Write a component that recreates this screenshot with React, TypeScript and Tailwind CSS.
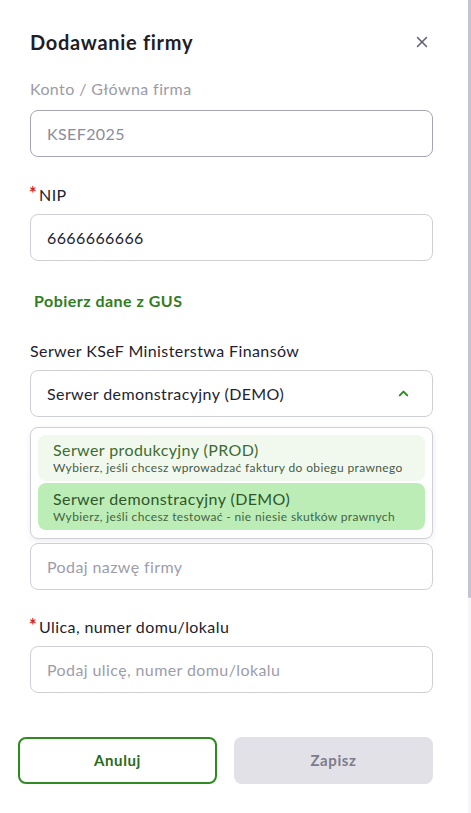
import { X, ChevronUp } from "lucide-react";

const font = { fontFamily: "Lato, 'Open Sans', sans-serif" };

const Label = ({ text, required, muted }: { text: string; required?: boolean; muted?: boolean }) => (
  <div className={`flex items-start text-[16px] leading-5 tracking-[0.025em] ${muted ? "text-[#9b9ba6]" : "text-[#22222e]"}`}>
    {required && <span className="text-[#d4202c] text-[18px] font-bold leading-4 mr-[2px] -ml-[1px]">*</span>}
    <span>{text}</span>
  </div>
);

const Input = ({ value, placeholder, dark, strong }: { value?: string; placeholder?: string; dark?: boolean; strong?: boolean }) => (
  <div
    className={`h-[47px] rounded-lg border bg-white flex items-center px-4 text-[16px] tracking-[0.025em] ${
      strong ? "border-[#a5a5b4]" : "border-[#cfcfd8]"
    } ${value ? (dark ? "text-[#23232f]" : "text-[#8c8c99]") : "text-[#9d9daa]"}`}
  >
    {value ?? placeholder}
  </div>
);

export default function App() {
  return (
    <div className="relative w-[471px] h-[813px] bg-white overflow-hidden" style={font}>
      <div className="pl-[30px] pr-[38px] pt-[30px]">
        {/* Header */}
        <div className="flex items-center justify-between h-[24px]">
          <h1 className="text-[20px] font-bold text-[#1e1e28] leading-6 tracking-[0.035em]">Dodawanie firmy</h1>
          <X className="w-[18px] h-[18px] text-[#5f5f72] mr-[2px]" strokeWidth={2} />
        </div>

        <div className="mt-[25px]">
          <Label text="Konto / Główna firma" muted />
        </div>
        <div className="mt-[11px]">
          <Input value="KSEF2025" strong />
        </div>

        <div className="mt-[28px]">
          <Label text="NIP" required />
        </div>
        <div className="mt-[9px]">
          <Input value="6666666666" dark />
        </div>

        <div className="mt-[30px] pl-[4px] text-[16px] font-bold text-[#2f7d1f] leading-5 tracking-[0.03em]">Pobierz dane z GUS</div>

        <div className="mt-[30px]">
          <Label text="Serwer KSeF Ministerstwa Finansów" />
        </div>
        <div className="mt-[9px] h-[47px] rounded-lg border border-[#cfcfd8] flex items-center justify-between px-4 text-[16px] tracking-[0.025em] text-[#23232f]">
          <span>Serwer demonstracyjny (DEMO)</span>
          <ChevronUp className="w-[15px] h-[15px] text-[#2f8a22] mr-[5px]" strokeWidth={3.2} />
        </div>

        {/* Dropdown */}
        <div className="mt-[10px] rounded-lg border border-[#cfcfd8] bg-white shadow-[0_2px_6px_rgba(0,0,0,0.08)] px-[7px] pt-[7px] pb-[8px] flex flex-col gap-[2px]">
          <div className="rounded-lg bg-[#f1f9ef] h-[46px] px-[15px] flex flex-col justify-center">
            <span className="text-[16px] leading-5 tracking-[0.025em] text-[#3d6b32]">Serwer produkcyjny (PROD)</span>
            <span className="text-[12px] leading-4 tracking-[0.03em] text-[#4a5a46]">Wybierz, jeśli chcesz wprowadzać faktury do obiegu prawnego</span>
          </div>
          <div className="rounded-lg bg-[#bcedb7] h-[47px] px-[15px] flex flex-col justify-center">
            <span className="text-[16px] leading-5 tracking-[0.025em] text-[#30562a]">Serwer demonstracyjny (DEMO)</span>
            <span className="text-[12px] leading-4 tracking-[0.03em] text-[#46643f]">Wybierz, jeśli chcesz testować - nie niesie skutków prawnych</span>
          </div>
        </div>

        <div className="mt-[4px]">
          <Input placeholder="Podaj nazwę firmy" />
        </div>

        <div className="mt-[27px]">
          <Label text="Ulica, numer domu/lokalu" required />
        </div>
        <div className="mt-[9px]">
          <Input placeholder="Podaj ulicę, numer domu/lokalu" />
        </div>
      </div>

      {/* Footer buttons */}
      <div className="mt-[44px] pl-[18px] pr-[38px] grid grid-cols-2 gap-[17px]">
        <button className="h-[47px] rounded-lg border-2 border-[#2f8a22] text-[15px] font-bold tracking-[0.04em] text-[#2a6a1d]">Anuluj</button>
        <button className="h-[47px] rounded-lg bg-[#e1e1e7] text-[15px] font-bold tracking-[0.04em] text-[#7c7c8c]">Zapisz</button>
      </div>

      {/* Scrollbar */}
      <div className="absolute right-0 top-0 w-[3px] h-full bg-[#f6f6f8]">
        <div className="w-full h-[598px] bg-[#c3c3d1] rounded-b-sm" />
      </div>
    </div>
  );
}
